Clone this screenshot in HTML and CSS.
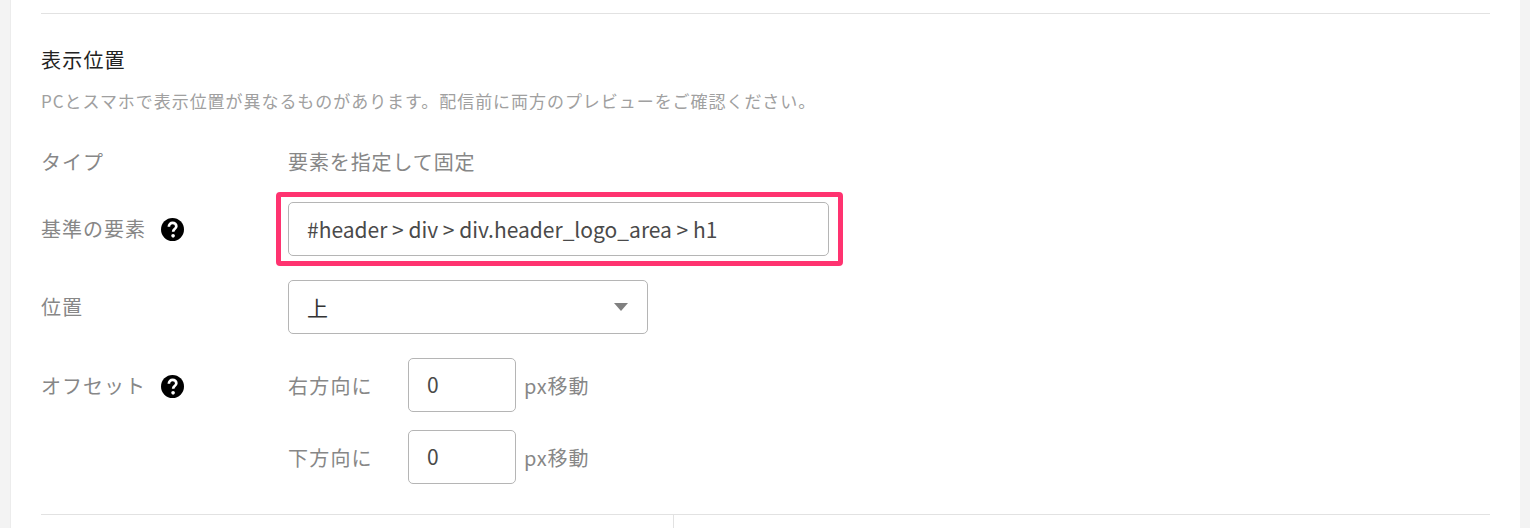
FILE: index.html
```html
<!DOCTYPE html>
<html lang="ja">
<head>
<meta charset="utf-8">
<title>表示位置</title>
<link rel="stylesheet" href="styles.css">
</head>
<body>
<main class="panel">
  <section class="section">
    <h2 class="title">表示位置</h2>
    <p class="desc">PCとスマホで表示位置が異なるものがあります。配信前に両方のプレビューをご確認ください。</p>
    <div class="row row-type">
      <div class="label">タイプ</div>
      <div class="value">要素を指定して固定</div>
    </div>
    <div class="row row-base">
      <div class="label">基準の要素<svg class="help" viewBox="0 0 24 24"><circle cx="12" cy="12" r="12" fill="#000"/><path d="M8.2 9.2C8.2 6.6 10 5.1 12.1 5.1c2.2 0 3.9 1.4 3.9 3.4 0 1.6-1 2.4-2 3.2-.9.7-1.3 1.3-1.3 2.7" fill="none" stroke="#fff" stroke-width="2.8"/><circle cx="12.6" cy="18.6" r="1.9" fill="#fff"/></svg></div>
      <div class="highlight"><div class="field field-wide">#header &gt; div &gt; div.header_logo_area &gt; h1</div></div>
    </div>
    <div class="row row-pos">
      <div class="label">位置</div>
      <div class="field field-select"><span>上</span><span class="caret"></span></div>
    </div>
    <div class="row row-offset">
      <div class="label">オフセット<svg class="help" viewBox="0 0 24 24"><circle cx="12" cy="12" r="12" fill="#000"/><path d="M8.2 9.2C8.2 6.6 10 5.1 12.1 5.1c2.2 0 3.9 1.4 3.9 3.4 0 1.6-1 2.4-2 3.2-.9.7-1.3 1.3-1.3 2.7" fill="none" stroke="#fff" stroke-width="2.8"/><circle cx="12.6" cy="18.6" r="1.9" fill="#fff"/></svg></div>
      <div class="offsets">
        <div class="offset"><span class="dir">右方向に</span><div class="field field-num">0</div><span class="unit">px移動</span></div>
        <div class="offset"><span class="dir">下方向に</span><div class="field field-num">0</div><span class="unit">px移動</span></div>
      </div>
    </div>
  </section>
  <div class="split"><div class="split-left"></div><div class="split-right"></div></div>
</main>
</body>
</html>
```
FILE: styles.css
```css
* { box-sizing: border-box; }
html, body { margin: 0; height: 528px; overflow: hidden; }
body {
  background: #f3f3f3;
  font-family: "Noto Sans CJK JP", "Noto Sans", sans-serif;
  color: #878787;
}
.panel {
  margin-left: 10px;
  width: 1510px;
  height: 528px;
  background: #fff;
  border-left: 1px solid #ececec;
  padding: 13px 30px 0 30px;
}
.section {
  border-top: 1px solid #e2e2e2;
  height: 502px;
  border-bottom: 1px solid #e2e2e2;
  padding-top: 31px;
}
.title {
  margin: 0;
  font-size: 20px;
  line-height: 30px;
  font-weight: 400;
  letter-spacing: 1.2px;
  color: #222;
}
.desc {
  margin: 14px 0 0;
  font-size: 17px;
  line-height: 24px;
  letter-spacing: 0.95px;
  color: #a0a0a0;
}
.row { display: flex; align-items: center; }
.label {
  width: 247px;
  flex: none;
  display: flex;
  align-items: center;
  font-size: 20px;
  letter-spacing: 1px;
  line-height: 28px;
}
.value { font-size: 20px; letter-spacing: 0.9px; line-height: 28px; }
.row-type { margin-top: 35px; }
.row-base { margin-top: 16px; }
.row-pos { margin-top: 14px; }
.row-offset { margin-top: 38px; align-items: flex-start; }
.help { width: 23px; height: 23px; margin-left: 15px; }
.highlight {
  margin-left: -12px;
  padding: 5px 9px 5px 7px;
  border: 5px solid #ff3370;
  border-radius: 4px;
  width: 567px;
}
.field {
  height: 54px;
  background: #fff;
  border: 1px solid #b5b5b5;
  border-radius: 5px;
  display: flex;
  align-items: center;
  color: #4a4a4a;
  font-size: 21px;
}
.field-wide { padding-left: 18px; }
.field-select {
  width: 360px;
  padding: 0 19px 0 18px;
  justify-content: space-between;
  color: #333;
}
.caret {
  width: 0; height: 0;
  border-left: 7px solid transparent;
  border-right: 7px solid transparent;
  border-top: 8px solid #808080;
}
.offsets { display: flex; flex-direction: column; gap: 18px; margin-top: -14px; }
.offset { display: flex; align-items: center; font-size: 20px; letter-spacing: 1.2px; }
.dir { width: 120px; flex: none; }
.field-num { width: 108px; padding: 0 0 2px 18px; }
.unit { margin-left: 8px; letter-spacing: 0.8px; }
.split { display: flex; height: 14px; }
.split-left { width: 633px; border-right: 1px solid #e2e2e2; }
.split-right { flex: 1; }
```
